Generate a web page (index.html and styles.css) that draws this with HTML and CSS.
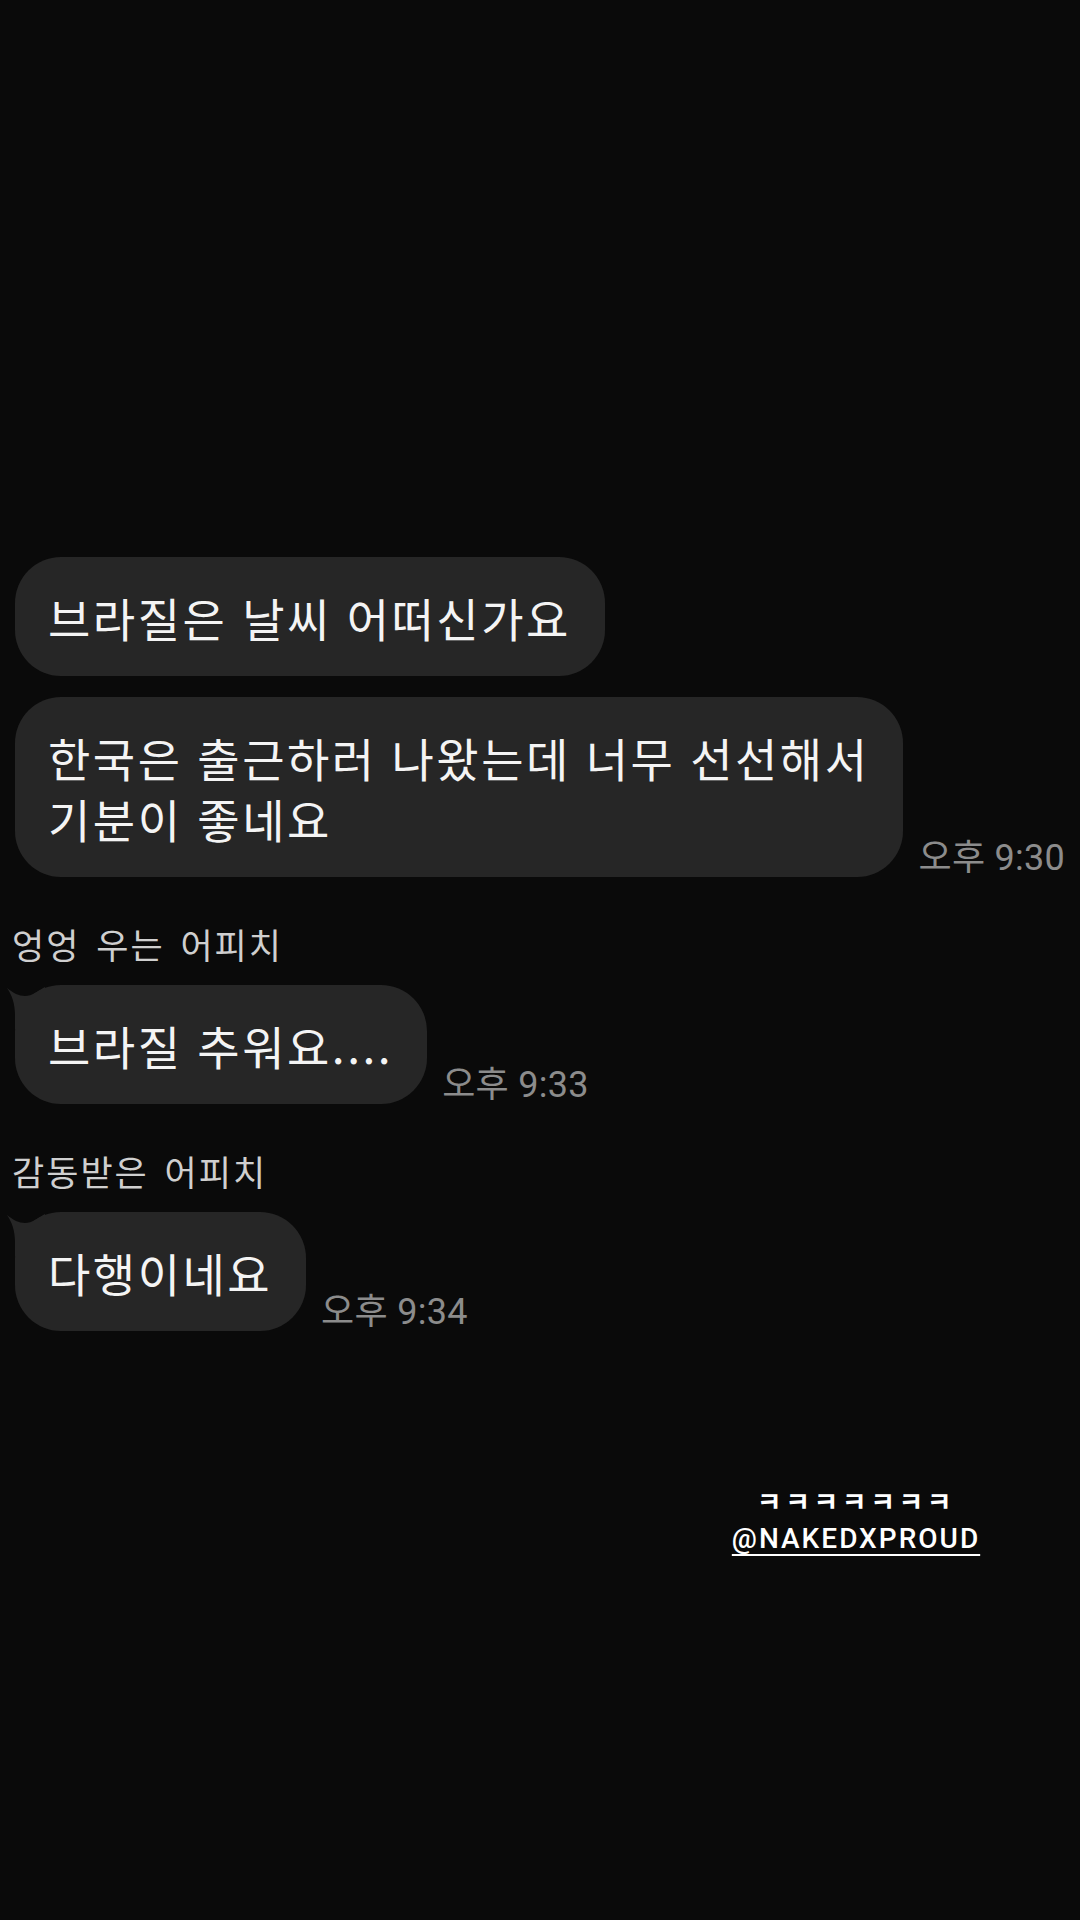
FILE: index.html
```html
<!DOCTYPE html>
<html lang="ko">
<head>
  <meta charset="UTF-8" />
  <title>채팅</title>
  <meta name="viewport" content="width=device-width, initial-scale=1.0" />
  <link rel="stylesheet" href="styles.css">
</head>
<body>
  <main class="chat">
    <div class="msg-row">
      <div class="bubble">브라질은 날씨 어떠신가요</div>
    </div>
    <div class="msg-row">
      <div class="bubble">한국은 출근하러 나왔는데 너무 선선해서<br>기분이 좋네요</div>
      <span class="time">오후 9:30</span>
    </div>

    <div class="sender">엉엉 우는 어피치</div>
    <div class="msg-row">
      <div class="bubble has-tail">
        <svg class="tail" viewBox="0 0 40 44" aria-hidden="true">
          <path d="M10 44 L10 30 C10 19 7 10 2 3 C8 8 14 11 20 11 C27 11 33 6 40 2 L40 44 Z" />
        </svg>
        브라질 추워요....
      </div>
      <span class="time">오후 9:33</span>
    </div>

    <div class="sender">감동받은 어피치</div>
    <div class="msg-row">
      <div class="bubble has-tail">
        <svg class="tail" viewBox="0 0 40 44" aria-hidden="true">
          <path d="M10 44 L10 30 C10 19 7 10 2 3 C8 8 14 11 20 11 C27 11 33 6 40 2 L40 44 Z" />
        </svg>
        다행이네요
      </div>
      <span class="time">오후 9:34</span>
    </div>
  </main>

  <!-- story sticker on top -->
  <div class="sticker">
    <div class="laugh">ㅋㅋㅋㅋㅋㅋㅋ</div>
    <div class="handle">@NAKEDXPROUD</div>
  </div>
</body>
</html>
```

FILE: styles.css
```css
* { margin: 0; padding: 0; box-sizing: border-box; }

body {
  background: #0a0a0a;
  color: #f2f2f2;
  font-family: "Noto Sans CJK KR", "Noto Sans", sans-serif;
  width: 1080px;
  height: 1920px;
  position: relative;
  overflow: hidden;
}

.chat {
  padding: 557px 0 0 12px;
  display: flex;
  flex-direction: column;
}

.msg-row {
  display: flex;
  align-items: flex-end;
  gap: 15px;
  padding-left: 3px;
}

.msg-row + .msg-row {
  margin-top: 21px;
}

.bubble {
  position: relative;
  flex: 0 1 auto;
  max-width: 920px;
  background: #262626;
  border-radius: 46px;
  padding: 30px 34px 28px 33px;
  font-size: 46px;
  line-height: 61px;
  letter-spacing: 2.5px;
  word-spacing: -0.5px;
  color: #f4f4f4;
  white-space: nowrap;
}

.tail {
  position: absolute;
  left: -10px;
  top: 0;
  width: 40px;
  height: 44px;
  fill: #262626;
}

.time {
  flex: none;
  font-family: Roboto, "Noto Sans CJK KR", sans-serif;
  font-size: 36px;
  line-height: 36px;
  letter-spacing: 0.3px;
  padding-bottom: 1px;
  color: #8c8c8c;
  white-space: nowrap;
}

.sender {
  margin-top: 46px;
  margin-bottom: 20px;
  font-size: 35px;
  line-height: 42px;
  letter-spacing: 2px;
  word-spacing: 4px;
  color: #cfcfcf;
}

.sticker {
  position: absolute;
  left: 700px;
  top: 1487px;
  width: 312px;
  text-align: center;
  color: #ffffff;
}

.laugh {
  font-size: 27px;
  font-weight: 700;
  line-height: 28px;
  letter-spacing: 3.5px;
}

.handle {
  margin-top: 7px;
  font-family: Roboto, "Liberation Sans", sans-serif;
  font-size: 28px;
  font-weight: 500;
  line-height: 34px;
  letter-spacing: 2px;
  text-decoration: underline;
  text-decoration-thickness: 2px;
  text-underline-offset: 6px;
}
```
